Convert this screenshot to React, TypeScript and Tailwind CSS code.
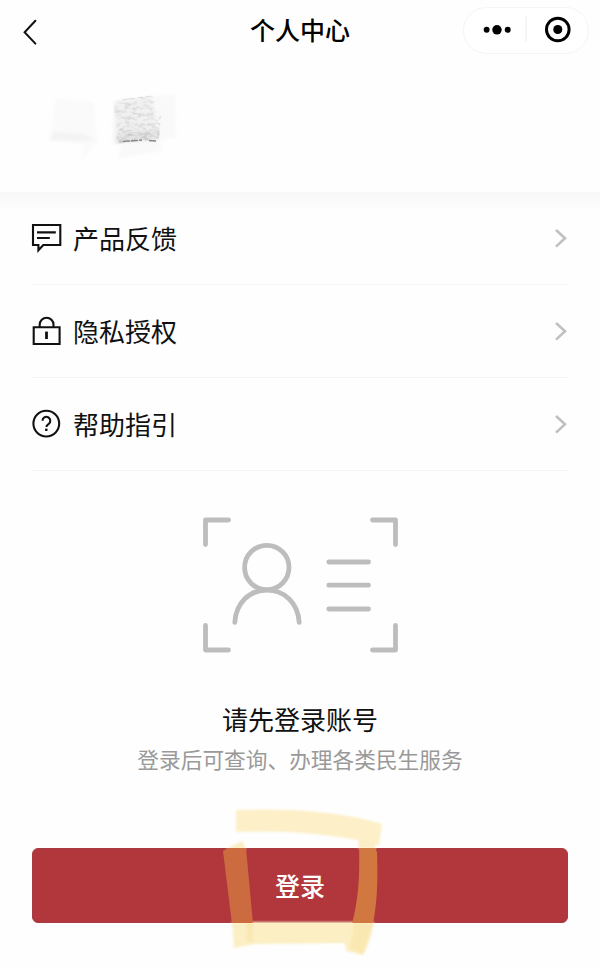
import type { ReactNode } from "react";

const iconClass = "-ml-[3px] h-[34px] w-[34px] shrink-0";

const FeedbackIcon = () => (
  <svg className={iconClass} viewBox="0 0 34 34" fill="none" stroke="#111" strokeWidth="2.1">
    <path d="M4 4H31.3V24H14.3L9.4 29.3V24H4Z" />
    <path d="M8 11.4H26.8M8 17H20.8" />
  </svg>
);

const LockIcon = () => (
  <svg className={iconClass} viewBox="0 0 34 34" fill="none" stroke="#111" strokeWidth="2.1">
    <path d="M4.7 13.2H30.6V30H4.7Z" />
    <path d="M10.7 13.2V10.6a6.9 6.9 0 0 1 13.8 0V13.2" />
    <path d="M17.5 17.6V25" strokeWidth="2.8" />
  </svg>
);

const HelpIcon = () => (
  <svg className={iconClass} viewBox="0 0 34 34" fill="none" stroke="#111" strokeWidth="2.1">
    <circle cx="17.3" cy="16.6" r="12.9" />
    <path d="M13.5 13.8a3.9 3.9 0 1 1 6.2 3.1c-1.5 1-2.3 1.6-2.3 3.2" />
    <path d="M17.3 21.6v2.4" strokeWidth="2.4" />
  </svg>
);

const items: { label: string; icon: ReactNode }[] = [
  { label: "产品反馈", icon: <FeedbackIcon /> },
  { label: "隐私授权", icon: <LockIcon /> },
  { label: "帮助指引", icon: <HelpIcon /> },
];

function Header() {
  return (
    <header className="flex h-[60px] items-center px-[11px]">
      <div className="flex flex-1">
        <svg className="ml-2 mt-1 h-7 w-5" viewBox="0 0 20 28" fill="none" stroke="#111" strokeWidth="2" strokeLinecap="round">
          <path d="M16.4 2.8L5.6 14.3L16.4 25.6" />
        </svg>
      </div>
      <h1 className="pb-px text-[25px] font-medium leading-[59px] text-black">个人中心</h1>
      <div className="flex flex-1 justify-end">
        <div className="flex h-[47px] w-[126px] items-center rounded-full border border-[#f5f5f5] bg-white">
          <svg className="h-[46px] w-full" viewBox="0 0 126 46" fill="none">
            <circle cx="23" cy="22.8" r="3" fill="#000" />
            <circle cx="33.5" cy="22.8" r="4.8" fill="#000" />
            <circle cx="44.4" cy="22.8" r="3" fill="#000" />
            <path d="M63 9V35" stroke="#ececec" />
            <circle cx="95.3" cy="22.5" r="11.5" stroke="#000" strokeWidth="3" />
            <circle cx="95.3" cy="22.5" r="4.6" fill="#000" />
          </svg>
        </div>
      </div>
    </header>
  );
}

// Rubbed-out avatar and nickname
function HiddenProfile() {
  return (
    <svg className="h-[100px] w-[200px]" viewBox="0 70 200 100">
      <defs>
        <filter id="grain" x="0" y="0" width="100%" height="100%">
          <feTurbulence type="fractalNoise" baseFrequency="0.16 0.3" numOctaves="3" seed="5" />
          <feColorMatrix values="0 0 0 0 0.35  0 0 0 0 0.35  0 0 0 0 0.35  1.5 0 0 0 -0.62" />
          <feComposite in2="SourceGraphic" operator="in" />
          <feGaussianBlur stdDeviation="0.7" />
        </filter>
        <filter id="soft">
          <feGaussianBlur stdDeviation="1.4" />
        </filter>
        <linearGradient id="fade" x1="0" y1="0" x2="0" y2="1">
          <stop offset="0" stopColor="#000" stopOpacity="0.4" />
          <stop offset="0.6" stopColor="#000" stopOpacity="0.6" />
          <stop offset="1" stopColor="#000" />
        </linearGradient>
      </defs>
      <g filter="url(#soft)">
        <path d="M56 98L94 102L97 143L82 160L84 145L49 140Z" fill="#fafafa" />
        <path d="M54 132L84 134L95 141L50 140Z" fill="#f3f3f3" />
        <path d="M113 101L175 94L176 137L161 140L162 151L118 159L121 145L112 143Z" fill="#f9f9f9" />
        <path d="M115 101L152 97L158 140L115 143Z" fill="#f1f1f1" />
        <path d="M118 133L157 129L157 140L115 143Z" fill="#e4e4e4" />
      </g>
      <path d="M113 102L133 97L153 96L155 109L161 116L159 139L140 141L113 144L118 134Z" fill="url(#fade)" filter="url(#grain)" />
      <path d="M123 141.5L142 140M149 140.5L156 141" stroke="#888" strokeWidth="1.3" strokeDasharray="7 1" fill="none" />
      <path d="M122 100L152 96M114 112L131 112" stroke="#dcdcdc" strokeDasharray="5 3" fill="none" />
    </svg>
  );
}

function MenuItem({ label, icon }: { label: string; icon: ReactNode }) {
  return (
    <li className="flex h-[93px] items-center border-b border-[#f5f5f5] text-[26px] text-[#111]">
      {icon}
      <span className="ml-[10px] flex-1 pb-[2px]">{label}</span>
      <svg className="h-5 w-[13px]" viewBox="0 0 13 20" fill="none" stroke="#c0c0c0" strokeWidth="2.6">
        <path d="M1 2L10 10.3L1 18.6" />
      </svg>
    </li>
  );
}

const IdCard = () => (
  <svg className="h-[136px] w-[196px]" viewBox="202 517 196 136" fill="none" stroke="#bdbdbd" strokeWidth="4.8" strokeLinecap="round" strokeLinejoin="round">
    <path d="M228.5 520H205.5V544.5M372.5 520H395.5V544.5M205.5 625.5V650H228.5M395.5 625.5V650H372.5" />
    <circle cx="266.8" cy="567.5" r="22.2" />
    <path d="M234.8 622.3C236 603 249 590.2 266.8 590.2S298 603 299.2 622.3" />
    <path d="M328.8 562H368.5M328.8 585.2H368.5M328.8 609H368.5" />
  </svg>
);

// Highlighter strokes circling the login button
const Marker = () => (
  <svg className="pointer-events-none absolute -top-[48px] left-[168px] h-[168px] w-[200px]" viewBox="0 0 200 168">
    <defs>
      <clipPath id="onButton">
        <path d="M0 48H200V123H0Z" />
      </clipPath>
      <filter id="edge" x="-10%" y="-10%" width="120%" height="120%">
        <feGaussianBlur stdDeviation="0.8" />
      </filter>
    </defs>
    <g filter="url(#edge)">
      <path d="M36 10C90 8 145 12 182 24L179 45L160 44L158 40C120 33 80 30 36 32Z" fill="#fdf0c8" />
      <path d="M26 49L42 41L46 49ZM158 48L159 40L174 43L176 49Z" fill="#fbedc5" />
      <path d="M32 122L174 122C171 138 167 149 163 155L146 151L145 143L55 144L34 148Z" fill="#fcefc3" />
      <path d="M46 123H53V142H47ZM154 123H173L163 154L150 148Z" fill="#fae8b2" />
    </g>
    <g clipPath="url(#onButton)">
      <path d="M23 51L28 48H46L53 124H32Z" fill="#cd6b40" />
      <path d="M159 47H174L177 52C178 84 177 102 173 124H152C158 101 160 78 159 47Z" fill="#d07840" />
    </g>
  </svg>
);

export default function App() {
  return (
    <main className="h-[968px] w-[600px] overflow-hidden bg-[#fefefe] font-['Noto_Sans_CJK_SC',sans-serif]">
      <Header />
      <section className="flex h-[132px] pt-[10px]">
        <HiddenProfile />
      </section>
      <div className="h-[18px] bg-linear-to-b from-[#f7f7f7] to-[#fefefe]" />
      <ul className="-mt-[18px] px-8">
        {items.map((item) => (
          <MenuItem key={item.label} {...item} />
        ))}
      </ul>
      <section className="flex flex-col items-center px-8 pt-[46px]">
        <IdCard />
        <h2 className="mt-[46px] text-[26px] leading-10 text-[#111]">请先登录账号</h2>
        <p className="mt-[4px] text-[21.7px] leading-8 text-[#999]">登录后可查询、办理各类民生服务</p>
        <div className="relative mt-[73px] w-full">
          <button className="block h-[75px] w-full rounded-[6px] border border-[#a63b41] bg-[#b2373d] text-[25px] font-medium text-white">
            登录
          </button>
          <Marker />
        </div>
      </section>
    </main>
  );
}
